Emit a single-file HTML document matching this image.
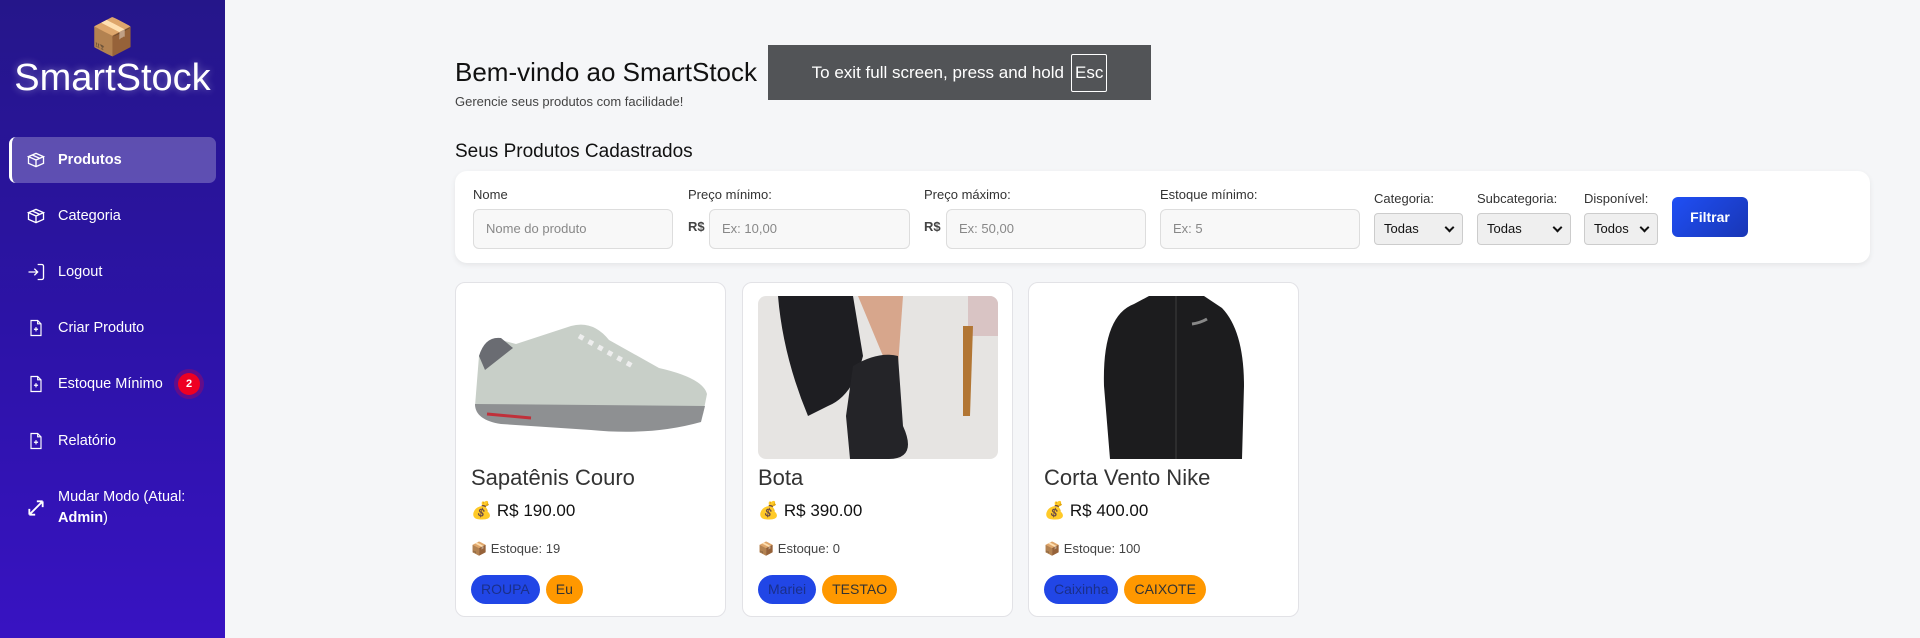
<!DOCTYPE html>
<html><head><meta charset="utf-8"><style>
*{box-sizing:border-box;margin:0;padding:0}
body{width:1920px;height:638px;overflow:hidden;background:#f5f6f8;font-family:"Liberation Sans",sans-serif;position:relative;color:#222}
.sb{position:absolute;left:0;top:0;width:225px;height:638px;background:linear-gradient(180deg,#25168a 0%,#2c13a6 50%,#3813c2 100%)}
.logo{position:absolute;left:0;width:225px;text-align:center;top:14px;font-size:36px;line-height:46px}
.brand{position:absolute;left:0;width:225px;text-align:center;top:57px;font-size:38px;color:#fff;text-shadow:0 0 8px rgba(255,255,255,.4)}
.it{position:absolute;left:9px;width:207px;height:46px;color:#fff;font-size:14.5px;display:flex;align-items:center;padding-left:17px}
.it svg{width:20px;height:20px;margin-right:12px;flex:none}
.act{background:rgba(255,255,255,.25);border-radius:7px;border-left:3px solid #fff;font-weight:bold;padding-left:14px}
.badge{position:absolute;left:178px;top:373px;width:22px;height:22px;border-radius:50%;background:#ee0022;color:#fff;font-size:11px;font-weight:bold;text-align:center;line-height:22px;box-shadow:0 0 0 4px rgba(220,0,60,.3)}
h1{position:absolute;left:455px;top:57px;font-size:26px;font-weight:normal;color:#111}
.sub{position:absolute;left:455px;top:94px;font-size:13px;color:#444}
.fs{position:absolute;left:768px;top:45px;width:383px;height:55px;background:#525457;color:#fff;font-size:17px;display:flex;align-items:center;justify-content:center}
.fs span{border:1px solid #fff;border-radius:2px;padding:8px 3px;margin-left:7px}
h2{position:absolute;left:455px;top:141px;font-size:19px;font-weight:normal;color:#111}
.fp{position:absolute;left:455px;top:171px;width:1415px;height:92px;background:#fff;border-radius:12px;box-shadow:0 2px 6px rgba(0,0,0,.07)}
.lb{position:absolute;font-size:13px;color:#333}
.in{position:absolute;height:40px;border:1px solid #ddd;border-radius:6px;background:#f8f8f8;font-size:13px;color:#888;padding:0 12px;line-height:38px}
.rs{position:absolute;font-size:13px;font-weight:bold;color:#444}
.sel{position:absolute;top:213px;height:32px;border:1px solid #ccc;border-radius:4px;background:#efefef;font-size:13px;color:#111;line-height:30px;padding-left:9px}
.sel:after{content:"";position:absolute;right:9px;top:10px;width:5px;height:5px;border-right:2px solid #111;border-bottom:2px solid #111;transform:rotate(45deg)}
.btn{position:absolute;left:1672px;top:197px;width:76px;height:40px;border-radius:6px;background:linear-gradient(135deg,#1f4ff5,#1936b5);color:#fff;font-weight:bold;font-size:14px;text-align:center;line-height:40px}
.card{position:absolute;top:282px;width:271px;height:335px;background:#fff;border:1px solid #e2e2e6;border-radius:10px}
.img{position:absolute;left:15px;top:13px;width:240px;height:163px;border-radius:8px;overflow:hidden}
.t{position:absolute;left:15px;top:182px;font-size:22px;color:#333}
.p{position:absolute;left:15px;top:218px;font-size:17px;color:#111}
.e{position:absolute;left:15px;top:258px;font-size:13px;color:#444}
.tags{position:absolute;left:15px;top:292px;display:flex;gap:6px}
.tag{height:29px;border-radius:15px;padding:0 10px;font-size:14px;line-height:29px}
.b{background:#2146e6;color:#1a2f8a}.o{background:#ff9800;color:#333}
</style></head><body>
<div class="sb">
<div class="logo">📦</div>
<div class="brand">SmartStock</div>
<div class="it act" style="top:137px"><svg viewBox="0 0 24 24" fill="none" stroke="#fff" stroke-width="1.6"><path d="M3 8l9-4 9 4-9 4z M3 8v8l9 4 9-4V8 M12 12v8 M7.5 6l9 4"/></svg>Produtos</div>
<div class="it" style="top:193px"><svg viewBox="0 0 24 24" fill="none" stroke="#fff" stroke-width="1.6"><path d="M3 8l9-4 9 4-9 4z M3 8v8l9 4 9-4V8 M12 12v8 M7.5 6l9 4"/></svg>Categoria</div>
<div class="it" style="top:249px"><svg viewBox="0 0 24 24" fill="none" stroke="#fff" stroke-width="1.6"><path d="M3 12h11 M10 8l4 4-4 4 M14 3h5a2 2 0 012 2v14a2 2 0 01-2 2h-5"/></svg>Logout</div>
<div class="it" style="top:305px"><svg viewBox="0 0 24 24" fill="none" stroke="#fff" stroke-width="1.4"><path d="M6 3h8l4 4v14H6z M14 3v4h4 M12 11v5 M9.5 13.5h5"/></svg>Criar Produto</div>
<div class="it" style="top:361px"><svg viewBox="0 0 24 24" fill="none" stroke="#fff" stroke-width="1.4"><path d="M6 3h8l4 4v14H6z M14 3v4h4 M12 11v5 M9.5 13.5h5"/></svg>Estoque Mínimo</div>
<div class="badge">2</div>
<div class="it" style="top:418px"><svg viewBox="0 0 24 24" fill="none" stroke="#fff" stroke-width="1.4"><path d="M6 3h8l4 4v14H6z M14 3v4h4 M12 11v5 M9.5 13.5h5"/></svg>Relatório</div>
<div class="it" style="top:483px;height:50px;line-height:21px"><svg viewBox="0 0 24 24" fill="none" stroke="#fff" stroke-width="2.2"><path d="M4 20L20 4 M4 20v-7 M4 20h7 M20 4h-7 M20 4v7"/></svg><div>Mudar Modo (Atual:<br><b>Admin</b>)</div></div>
</div>

<h1>Bem-vindo ao SmartStock</h1>
<div class="sub">Gerencie seus produtos com facilidade!</div>
<div class="fs">To exit full screen, press and hold <span>Esc</span></div>
<h2>Seus Produtos Cadastrados</h2>
<div class="fp"></div>
<div class="lb" style="left:473px;top:187px">Nome</div>
<div class="in" style="left:473px;top:209px;width:200px">Nome do produto</div>
<div class="lb" style="left:688px;top:187px">Preço mínimo:</div>
<div class="rs" style="left:688px;top:219px">R$</div>
<div class="in" style="left:709px;top:209px;width:201px">Ex: 10,00</div>
<div class="lb" style="left:924px;top:187px">Preço máximo:</div>
<div class="rs" style="left:924px;top:219px">R$</div>
<div class="in" style="left:946px;top:209px;width:200px">Ex: 50,00</div>
<div class="lb" style="left:1160px;top:187px">Estoque mínimo:</div>
<div class="in" style="left:1160px;top:209px;width:200px">Ex: 5</div>
<div class="lb" style="left:1374px;top:191px">Categoria:</div>
<div class="sel" style="left:1374px;width:89px">Todas</div>
<div class="lb" style="left:1477px;top:191px">Subcategoria:</div>
<div class="sel" style="left:1477px;width:94px">Todas</div>
<div class="lb" style="left:1584px;top:191px">Disponível:</div>
<div class="sel" style="left:1584px;width:74px">Todos</div>
<div class="btn">Filtrar</div>

<div class="card" style="left:455px">
<div class="img"><svg width="240" height="163" viewBox="0 0 240 163">
<rect width="240" height="163" fill="#fff"/>
<path d="M4 110 L8 60 Q14 42 30 44 L45 48 L100 30 Q122 24 138 44 L188 72 Q232 82 236 98 L232 118 Q200 128 150 122 L40 118 Q8 118 4 110z" fill="#c8cfc8"/>
<path d="M8 60 Q14 40 30 42 L42 52 L14 74z" fill="#6a6c72"/>
<path d="M4 108 L234 110 L230 126 Q180 140 120 134 L30 128 Q4 124 4 108z" fill="#8e9092"/>
<path d="M16 118 L60 122" stroke="#c0303a" stroke-width="3"/>
<path d="M108 40 L165 72" stroke="#eee" stroke-width="5" stroke-dasharray="5 6"/>
</svg></div>
<div class="t">Sapatênis Couro</div>
<div class="p">💰 R$ 190.00</div>
<div class="e">📦 Estoque: 19</div>
<div class="tags"><div class="tag b">ROUPA</div><div class="tag o">Eu</div></div>
</div>

<div class="card" style="left:742px">
<div class="img"><svg width="240" height="163" viewBox="0 0 240 163">
<rect width="240" height="163" fill="#e6e4e2"/>
<rect x="210" y="0" width="30" height="40" fill="#d9c4c4"/>
<path d="M205 30 L215 30 L212 120 L205 120z" fill="#b27634"/>
<path d="M100 0 L145 0 L140 70 L125 60z" fill="#d7a68c"/>
<path d="M20 0 L95 0 L105 60 Q95 100 70 110 L50 120 Q25 60 20 0z" fill="#1e1e22"/>
<path d="M95 70 Q120 55 140 60 L145 130 Q160 163 130 163 L92 163 L88 120z" fill="#242428"/>
</svg></div>
<div class="t">Bota</div>
<div class="p">💰 R$ 390.00</div>
<div class="e">📦 Estoque: 0</div>
<div class="tags"><div class="tag b">Mariei</div><div class="tag o">TESTAO</div></div>
</div>

<div class="card" style="left:1028px">
<div class="img"><svg width="240" height="163" viewBox="0 0 240 163">
<rect width="240" height="163" fill="#fff"/>
<path d="M66 163 L60 90 Q58 20 90 8 L105 0 L160 0 L178 12 Q200 35 200 90 L198 163z" fill="#1c1c1e"/>
<path d="M132 0 L132 163" stroke="#333" stroke-width="1.5"/>
<path d="M148 28 Q156 27 163 23" stroke="#888" stroke-width="3" fill="none"/>
</svg></div>
<div class="t">Corta Vento Nike</div>
<div class="p">💰 R$ 400.00</div>
<div class="e">📦 Estoque: 100</div>
<div class="tags"><div class="tag b">Caixinha</div><div class="tag o">CAIXOTE</div></div>
</div>
</body></html>
